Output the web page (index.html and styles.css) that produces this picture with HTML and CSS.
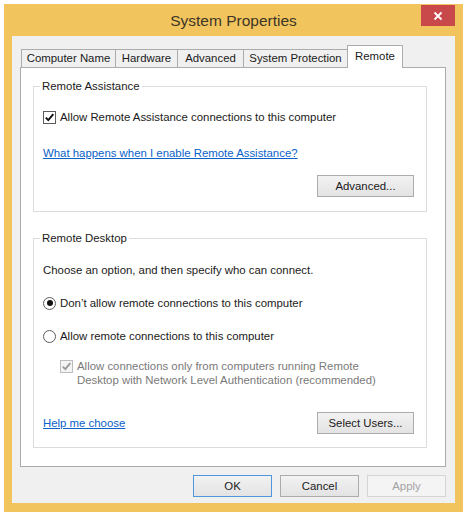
FILE: index.html
```html
<!DOCTYPE html>
<html>
<head>
<meta charset="utf-8">
<link rel="stylesheet" href="styles.css">
</head>
<body>
<div class="window">
  <div class="titlebar">
    <span class="title">System Properties</span>
    <div class="close"><svg width="10" height="10" viewBox="0 0 10 10"><path d="M1.5 1.5 L8.5 8.5 M8.5 1.5 L1.5 8.5" stroke="#fff" stroke-width="1.8" fill="none"/></svg></div>
  </div>
  <div class="client">
    <div class="tabs">
      <div class="tab t-cn">Computer Name</div>
      <div class="tab t-hw">Hardware</div>
      <div class="tab t-adv">Advanced</div>
      <div class="tab t-sp">System Protection</div>
      <div class="tab t-rem selected">Remote</div>
    </div>
    <div class="panel">
      <div class="group g1">
        <div class="group-title">Remote Assistance</div>
        <div class="check-row r-allow">
          <span class="checkbox"><svg width="11" height="11" viewBox="0 0 11 11"><path d="M1.8 5.6 L4.3 8.2 L9.3 2.2" stroke="#111" stroke-width="1.9" fill="none"/></svg></span>
          <span>Allow Remote Assistance connections to this computer</span>
        </div>
        <div class="link-row r-what"><a class="link">What happens when I enable Remote Assistance?</a></div>
        <div class="btn-row r-adv"><div class="btn btn-panel">Advanced...</div></div>
      </div>
      <div class="group g2">
        <div class="group-title">Remote Desktop</div>
        <div class="text-row r-choose">Choose an option, and then specify who can connect.</div>
        <div class="check-row r-radio1">
          <span class="radio on"><span class="dot"></span></span>
          <span>Don’t allow remote connections to this computer</span>
        </div>
        <div class="check-row r-radio2">
          <span class="radio"></span>
          <span>Allow remote connections to this computer</span>
        </div>
        <div class="nla-row">
          <span class="checkbox disabled"><svg width="11" height="11" viewBox="0 0 11 11"><path d="M1.8 5.6 L4.3 8.2 L9.3 2.2" stroke="#9a9a9a" stroke-width="1.9" fill="none"/></svg></span>
          <span class="nla-text">Allow connections only from computers running Remote<br>Desktop with Network Level Authentication (recommended)</span>
        </div>
        <div class="help-row">
          <a class="link">Help me choose</a>
          <div class="btn btn-panel">Select Users...</div>
        </div>
      </div>
    </div>
    <div class="buttons">
      <div class="btn btn-dlg default">OK</div>
      <div class="btn btn-dlg">Cancel</div>
      <div class="btn btn-dlg disabled">Apply</div>
    </div>
  </div>
</div>
</body>
</html>
```

FILE: styles.css
```css
* { box-sizing: border-box; }
html, body { margin: 0; padding: 0; background: #ffffff; }
body {
  padding: 4px 0 0 4px;
  font-family: "Liberation Sans", Arial, sans-serif;
  font-size: 11.4px;
  color: #1a1a1a;
}
.window {
  width: 459px;
  height: 508px;
  background: #f1c45e;
  padding: 0 8px 9px 8px;
  display: flex;
  flex-direction: column;
}
.titlebar {
  height: 32px;
  position: relative;
  display: flex;
  align-items: center;
  justify-content: center;
}
.title {
  font-size: 15.5px;
  color: #3d3626;
  padding-top: 1px;
}
.close {
  position: absolute;
  right: 0;
  top: 1px;
  width: 34px;
  height: 21px;
  background: #c9484a;
  display: flex;
  align-items: center;
  justify-content: center;
}
.client {
  flex: 1;
  background: #f0f0f0;
  padding: 9px 9px 6px 8px;
  display: flex;
  flex-direction: column;
}
.tabs {
  display: flex;
  align-items: flex-end;
  height: 22px;
  padding-left: 1px;
}
.tab {
  height: 18px;
  line-height: 17px;
  text-align: center;
  border: 1px solid #acacac;
  border-bottom: none;
  background: #f0f0f0;
  margin-left: -1px;
  color: #1a1a1a;
}
.tab.t-cn { margin-left: 0; width: 95px; }
.t-hw { width: 63px; }
.t-adv { width: 67px; }
.t-sp { width: 105px; }
.tab.selected {
  width: 56px;
  height: 23px;
  margin-bottom: -1px;
  line-height: 14px;
  padding-top: 3px;
  background: #ffffff;
  position: relative;
  z-index: 1;
}
.panel {
  width: 426px;
  height: 400px;
  border: 1px solid #acacac;
  background: #ffffff;
  padding: 18px 0 0 12px;
}
.group {
  width: 394px;
  border: 1px solid #dcdcdc;
  padding: 0 0 0 9px;
}
.g1 { height: 126px; }
.g2 { height: 210px; margin-top: 26px; }
.group-title {
  width: max-content;
  margin: -8px 0 0 -3px;
  padding: 0 2px;
  line-height: 14px;
  background: #ffffff;
  color: #1a1a1a;
}
.check-row {
  display: flex;
  align-items: center;
  height: 14px;
  line-height: 14px;
  gap: 4px;
}
.r-allow { margin-top: 17px; }
.link-row { margin-top: 22px; line-height: 14px; height: 14px; }
.link {
  color: #0a62c9;
  text-decoration: underline;
  text-underline-offset: 1px;
}
.btn-row {
  display: flex;
  justify-content: flex-end;
  margin-top: 15px;
  padding-right: 12px;
}
.btn {
  height: 22px;
  border: 1px solid #acacac;
  background: linear-gradient(#f2f2f2, #e3e3e3);
  display: flex;
  align-items: center;
  justify-content: center;
  color: #1a1a1a;
}
.btn-panel { width: 97px; }
.checkbox {
  width: 13px;
  height: 13px;
  border: 1px solid #5c5c5c;
  background: #ffffff;
  display: flex;
  align-items: center;
  justify-content: center;
  flex: none;
}
.checkbox.disabled {
  border-color: #bcbcbc;
  background: #f4f4f4;
}
.radio {
  width: 13px;
  height: 13px;
  border: 1px solid #5c5c5c;
  border-radius: 50%;
  background: #ffffff;
  display: flex;
  align-items: center;
  justify-content: center;
  flex: none;
}
.dot {
  width: 6px;
  height: 6px;
  border-radius: 50%;
  background: #111;
}
.text-row { margin-top: 18px; line-height: 14px; height: 14px; }
.r-radio1 { margin-top: 19px; }
.r-radio2 { margin-top: 19px; }
.nla-row {
  display: flex;
  align-items: flex-start;
  gap: 4px;
  margin-top: 17px;
  padding-left: 17px;
}
.nla-row .checkbox { margin-top: 0; }
.nla-text {
  line-height: 14px;
  color: #7a7a7a;
  margin-top: -1px;
}
.help-row {
  display: flex;
  align-items: center;
  justify-content: space-between;
  margin-top: 25px;
  padding-right: 12px;
}
.buttons {
  display: flex;
  justify-content: flex-end;
  gap: 8px;
  margin-top: 8px;
}
.btn-dlg { width: 79px; }
.btn-dlg.default { border-color: #4f97dc; }
.btn-dlg.disabled {
  border-color: #d5d5d5;
  background: #f4f4f4;
  color: #a3a3a3;
}
```
